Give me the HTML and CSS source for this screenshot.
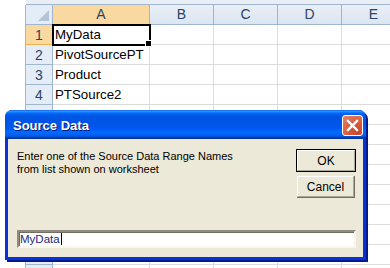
FILE: index.html
```html
<!DOCTYPE html>
<html>
<head>
<meta charset="utf-8">
<link rel="stylesheet" href="styles.css">
</head>
<body>
<div class="sheet">
  <div class="topstrip"></div>
  <div class="row hdr">
    <div class="gutter"></div>
    <div class="rh corner"><svg class="tri" width="11" height="11" viewBox="0 0 11 11"><polygon points="11,0 11,11 0,11" fill="#b4c3d6"/></svg></div>
    <div class="cell ch a sel">A</div>
    <div class="cell ch b">B</div>
    <div class="cell ch c">C</div>
    <div class="cell ch d">D</div>
    <div class="cell ch e">E</div>
  </div>
  <div class="row">
    <div class="gutter"></div>
    <div class="rh sel">1</div>
    <div class="cell a active">MyData<span class="handle"></span></div>
    <div class="cell b"></div><div class="cell c"></div><div class="cell d"></div><div class="cell e"></div>
  </div>
  <div class="row">
    <div class="gutter"></div>
    <div class="rh">2</div>
    <div class="cell a">PivotSourcePT</div>
    <div class="cell b"></div><div class="cell c"></div><div class="cell d"></div><div class="cell e"></div>
  </div>
  <div class="row">
    <div class="gutter"></div>
    <div class="rh">3</div>
    <div class="cell a">Product</div>
    <div class="cell b"></div><div class="cell c"></div><div class="cell d"></div><div class="cell e"></div>
  </div>
  <div class="row">
    <div class="gutter"></div>
    <div class="rh">4</div>
    <div class="cell a">PTSource2</div>
    <div class="cell b"></div><div class="cell c"></div><div class="cell d"></div><div class="cell e"></div>
  </div>
  <div class="row">
    <div class="gutter"></div>
    <div class="rh"></div>
    <div class="cell a"></div><div class="cell b"></div><div class="cell c"></div><div class="cell d"></div><div class="cell e"></div>
  </div>
  <div class="row">
    <div class="gutter"></div>
    <div class="rh"></div>
    <div class="cell a"></div><div class="cell b"></div><div class="cell c"></div><div class="cell d"></div><div class="cell e"></div>
  </div>
  <div class="row">
    <div class="gutter"></div>
    <div class="rh"></div>
    <div class="cell a"></div><div class="cell b"></div><div class="cell c"></div><div class="cell d"></div><div class="cell e"></div>
  </div>
  <div class="row">
    <div class="gutter"></div>
    <div class="rh"></div>
    <div class="cell a"></div><div class="cell b"></div><div class="cell c"></div><div class="cell d"></div><div class="cell e"></div>
  </div>
  <div class="row">
    <div class="gutter"></div>
    <div class="rh"></div>
    <div class="cell a"></div><div class="cell b"></div><div class="cell c"></div><div class="cell d"></div><div class="cell e"></div>
  </div>
  <div class="row">
    <div class="gutter"></div>
    <div class="rh"></div>
    <div class="cell a"></div><div class="cell b"></div><div class="cell c"></div><div class="cell d"></div><div class="cell e"></div>
  </div>
  <div class="row">
    <div class="gutter"></div>
    <div class="rh"></div>
    <div class="cell a"></div><div class="cell b"></div><div class="cell c"></div><div class="cell d"></div><div class="cell e"></div>
  </div>
  <div class="row">
    <div class="gutter"></div>
    <div class="rh"></div>
    <div class="cell a"></div><div class="cell b"></div><div class="cell c"></div><div class="cell d"></div><div class="cell e"></div>
  </div>
  <div class="row">
    <div class="gutter"></div>
    <div class="rh"></div>
    <div class="cell a"></div><div class="cell b"></div><div class="cell c"></div><div class="cell d"></div><div class="cell e"></div>
  </div>

  <div class="dialog">
    <div class="titlebar">
      <span class="title">Source Data</span>
      <span class="close"><svg width="13" height="13" viewBox="0 0 13 13"><path d="M2 2 L11 11 M11 2 L2 11" stroke="#fff" stroke-width="2.4" stroke-linecap="square"/></svg></span>
    </div>
    <div class="body">
      <div class="top">
        <div class="msg">Enter one of the Source Data Range Names<br>from list shown on worksheet</div>
        <div class="btns">
          <div class="btn default"><span class="inner">OK</span></div>
          <div class="btn cancel"><span class="inner">Cancel</span></div>
        </div>
      </div>
      <div class="input"><span class="val">MyData</span><span class="caret"></span></div>
    </div>
  </div>
</div>
</body>
</html>
```
FILE: styles.css
```css
html, body { margin: 0; padding: 0; }
body { background: #fff; }
.sheet {
  position: relative;
  width: 390px;
  height: 268px;
  overflow: hidden;
  background: #fff;
  font-family: "Liberation Sans", Arial, sans-serif;
}
.topstrip {
  height: 4px;
  background: #e9eef5;
  border-bottom: 1px solid #9eb6ce;
  margin-left: 26px;
}
.row { display: flex; height: 20px; }
.gutter {
  width: 26px;
  flex: none;
  box-sizing: border-box;
  border-right: 1px solid #a9b8c8;
  background: #fff;
}
.rh {
  width: 27px;
  flex: none;
  box-sizing: border-box;
  background: #e4ecf7;
  border-right: 1px solid #9eb6ce;
  border-bottom: 1px solid #9eb6ce;
  color: #2a4466;
  font-size: 14px;
  display: flex;
  align-items: center;
  justify-content: center;
}
.rh.sel { background: #f9d99f; border-bottom-color: #f2b44d; border-right-color: #f2b44d; }
.corner { position: relative; }
.tri { position: absolute; right: 3px; bottom: 3px; }
.cell {
  flex: none;
  box-sizing: border-box;
  border-right: 1px solid #dadcdd;
  border-bottom: 1px solid #dadcdd;
  font-size: 13.3px;
  color: #000;
  padding-left: 2px;
  line-height: 19px;
  white-space: nowrap;
  position: relative;
}
.a { width: 97px; }
.b { width: 64px; }
.c { width: 64px; }
.d { width: 64px; }
.e { width: 64px; }
.hdr .ch {
  background: linear-gradient(#e9eff8, #dbe5f1);
  border-right: 1px solid #9eb6ce;
  border-bottom: 1px solid #9eb6ce;
  color: #2a4466;
  text-align: center;
  padding-left: 0;
  font-size: 14px;
}
.hdr .ch.sel { background: #f9d99f; border-bottom-color: #f2b44d; }
.active { outline: 2px solid #000; outline-offset: -1px; z-index: 1; }
.handle {
  position: absolute;
  right: -3px;
  bottom: -3px;
  width: 5px;
  height: 5px;
  background: #000;
  border: 1px solid #fff;
}

.dialog {
  position: absolute;
  left: 5px;
  top: 110px;
  width: 361px;
  height: 150px;
  box-sizing: border-box;
  background: #0831d9;
  border-radius: 7px 7px 0 0;
  box-shadow: 2px 2px 0 0 #001a8c;
  display: flex;
  flex-direction: column;
  font-family: "Liberation Sans", Tahoma, sans-serif;
}
.titlebar {
  height: 29px;
  flex: none;
  border-radius: 7px 7px 0 0;
  background: linear-gradient(#0058ee 0%, #3593ff 4%, #288eff 6%, #127dff 8%, #036ffc 10%, #0262ee 14%, #0057e5 20%, #0054e3 24%, #0055eb 56%, #005bf5 66%, #026afe 76%, #0062ef 86%, #0052d6 92%, #0040ab 94%, #003092 100%);
  display: flex;
  align-items: center;
  justify-content: space-between;
  padding: 0 3px 0 8px;
}
.title {
  color: #fff;
  font-weight: bold;
  font-size: 13px;
  text-shadow: 1px 1px 0 #0a1883;
  margin-top: 1px;
}
.close {
  width: 21px;
  height: 21px;
  box-sizing: border-box;
  border: 1px solid #fff;
  border-radius: 3px;
  background: radial-gradient(circle at 80% 85%, #cc4627 0%, #d75c3c 45%, #e88468 100%);
  display: flex;
  align-items: center;
  justify-content: center;
  margin-top: 1px;
}
.body {
  flex: 1;
  margin: 0 3px 3px 3px;
  background: #ece9d8;
  display: flex;
  flex-direction: column;
  justify-content: space-between;
  padding: 10px 7px 9px 9px;
}
.top { display: flex; justify-content: space-between; }
.msg {
  font-size: 11px;
  line-height: 13px;
  color: #000;
  margin-top: 1px;
}
.btns { display: flex; flex-direction: column; align-items: center; gap: 4px; }
.btn {
  box-sizing: border-box;
  background: #ece9d8;
  font-size: 12px;
  color: #000;
  display: flex;
}
.btn .inner {
  flex: 1;
  display: flex;
  align-items: center;
  justify-content: center;
  border-top: 1px solid #fff;
  border-left: 1px solid #fff;
  border-right: 1px solid #aca899;
  border-bottom: 1px solid #aca899;
}
.btn.default { width: 60px; height: 23px; border: 1px solid #000; box-shadow: inset -1px -1px 0 #716f64; }
.btn.cancel { width: 58px; height: 22px; border-right: 1px solid #716f64; border-bottom: 1px solid #716f64; }
.input {
  height: 18px;
  box-sizing: border-box;
  background: #fff;
  border-top: 2px solid #8f8c7f;
  border-left: 2px solid #8f8c7f;
  border-right: 2px solid #f7f6ef;
  border-bottom: 2px solid #f7f6ef;
  box-shadow: inset 1px 1px 0 #716f64;
  display: flex;
  align-items: center;
  padding-left: 1px;
  font-size: 11.5px;
  color: #1a2a80;
}
.caret { width: 1px; height: 12px; background: #000; margin-left: 1px; }
```
